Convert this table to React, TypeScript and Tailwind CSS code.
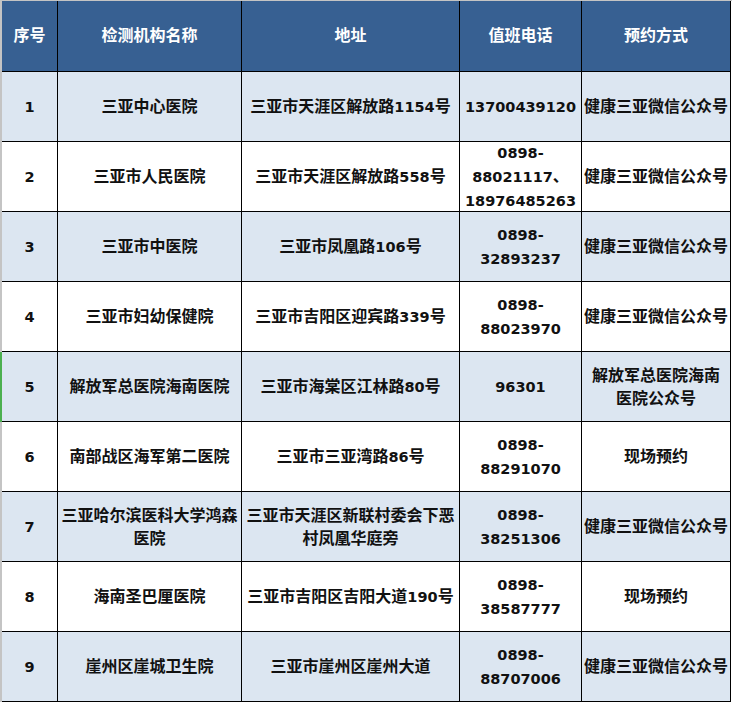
import { Fragment } from 'react'

interface Row {
  no: string
  name: string[]
  address: string[]
  phone: string[]
  method: string[]
}

const rows: Row[] = [
  { no: '1', name: ['三亚中心医院'], address: ['三亚市天涯区解放路1154号'], phone: ['13700439120'], method: ['健康三亚微信公众号'] },
  { no: '2', name: ['三亚市人民医院'], address: ['三亚市天涯区解放路558号'], phone: ['0898-', '88021117、', '18976485263'], method: ['健康三亚微信公众号'] },
  { no: '3', name: ['三亚市中医院'], address: ['三亚市凤凰路106号'], phone: ['0898-', '32893237'], method: ['健康三亚微信公众号'] },
  { no: '4', name: ['三亚市妇幼保健院'], address: ['三亚市吉阳区迎宾路339号'], phone: ['0898-', '88023970'], method: ['健康三亚微信公众号'] },
  { no: '5', name: ['解放军总医院海南医院'], address: ['三亚市海棠区江林路80号'], phone: ['96301'], method: ['解放军总医院海南', '医院公众号'] },
  { no: '6', name: ['南部战区海军第二医院'], address: ['三亚市三亚湾路86号'], phone: ['0898-', '88291070'], method: ['现场预约'] },
  { no: '7', name: ['三亚哈尔滨医科大学鸿森', '医院'], address: ['三亚市天涯区新联村委会下恶', '村凤凰华庭旁'], phone: ['0898-', '38251306'], method: ['健康三亚微信公众号'] },
  { no: '8', name: ['海南圣巴厘医院'], address: ['三亚市吉阳区吉阳大道190号'], phone: ['0898-', '38587777'], method: ['现场预约'] },
  { no: '9', name: ['崖州区崖城卫生院'], address: ['三亚市崖州区崖州大道'], phone: ['0898-', '88707006'], method: ['健康三亚微信公众号'] },
]

const widths = ['w-[56px]', 'w-[184px]', 'w-[218px]', 'w-[122px]', 'w-[149px]']

// latin runs use a smaller DejaVu so digits come out ~10px wide like the sheet
function Mixed({ text }: { text: string }) {
  const parts = text.split(/([\x20-\x7e]+)/).filter(Boolean)
  return (
    <>
      {parts.map((p, i) =>
        /^[\x20-\x7e]+$/.test(p) ? (
          <span key={i} className="text-[14.5px]">
            {p}
          </span>
        ) : (
          <span key={i}>{p}</span>
        )
      )}
    </>
  )
}

function Cell({ lines, col, extra = '' }: { lines: string[]; col: number; extra?: string }) {
  return (
    <div
      className={`${widths[col]} h-[70px] shrink-0 flex flex-col items-center justify-center border-r border-b border-black text-center leading-[23px] ${extra}`}
    >
      {lines.map((l, i) => (
        <Fragment key={i}>
          <div className="whitespace-nowrap">
            <Mixed text={l} />
          </div>
        </Fragment>
      ))}
    </div>
  )
}

export default function App() {
  const headers = ['序号', '检测机构名称', '地址', '值班电话', '预约方式']

  return (
    <div
      className="w-[732px] h-[703px] overflow-hidden bg-white border-t border-[#c4c4c4] font-bold text-[16px] text-[#111]"
      style={{ fontFamily: '"DejaVu Sans", "Noto Sans CJK SC", sans-serif' }}
    >
      <div className="flex">
        <div className="w-[2px] h-[71px] bg-[#c4c4c4]" />
        {headers.map((h, i) => (
          <div
            key={h}
            className={`${widths[i]} h-[71px] shrink-0 flex items-center justify-center border-r border-b border-black bg-[#376092] text-white`}
          >
            {h}
          </div>
        ))}
      </div>
      {rows.map((r, idx) => {
        const bg = idx % 2 === 0 ? 'bg-[#dce6f1]' : 'bg-white'
        return (
          <div key={r.no} className="flex">
            <div className={`w-[2px] h-[70px] ${r.no === '5' ? 'bg-[#4cb050]' : 'bg-[#c4c4c4]'}`} />
            <Cell lines={[r.no]} col={0} extra={bg} />
            <Cell lines={r.name} col={1} extra={bg} />
            <Cell lines={r.address} col={2} extra={bg} />
            <Cell lines={r.phone} col={3} extra={bg} />
            <Cell lines={r.method} col={4} extra={bg} />
          </div>
        )
      })}
    </div>
  )
}
